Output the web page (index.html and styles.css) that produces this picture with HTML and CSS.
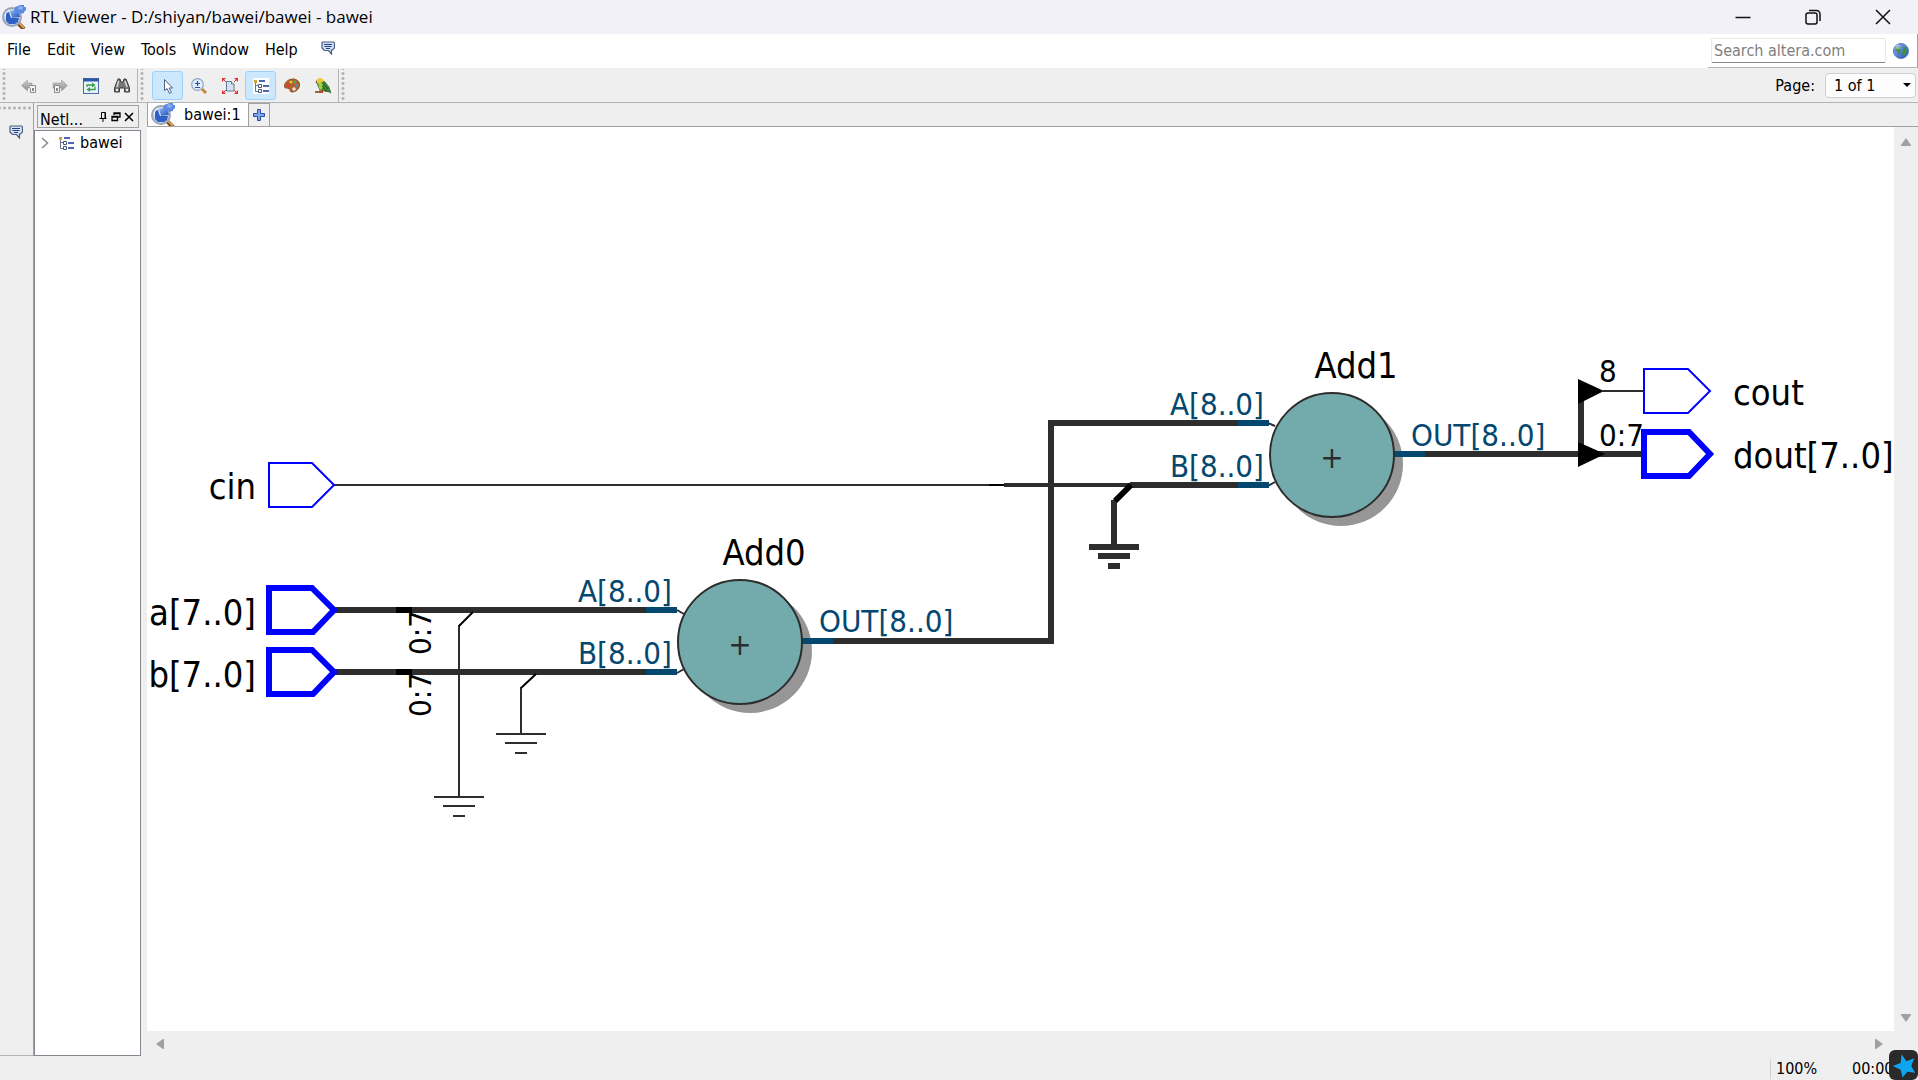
FILE: index.html
```html
<!DOCTYPE html>
<html lang="en">
<head>
<meta charset="utf-8">
<title>RTL Viewer - D:/shiyan/bawei/bawei - bawei</title>
<link rel="stylesheet" href="styles.css">
</head>
<body>
<svg class="defs" aria-hidden="true">
  <defs>
    <linearGradient id="blue" x1="0" y1="0" x2="1" y2="1"><stop offset="0" stop-color="#8fb4f2"/><stop offset="1" stop-color="#2350b8"/></linearGradient>
    <radialGradient id="lens"><stop offset="0" stop-color="#f2f8ff"/><stop offset="1" stop-color="#b9d2f0"/></radialGradient>
    <linearGradient id="grey" x1="0" y1="0" x2="0" y2="1"><stop offset="0" stop-color="#d0d0d0"/><stop offset="1" stop-color="#8c8c8c"/></linearGradient>
    <symbol id="app" viewBox="0 0 24 24">
      <path d="M15 17l7 7" stroke="#6b3f12" stroke-width="4"/><path d="M17 18l5 5" stroke="#e0a050" stroke-width="2"/>
      <circle cx="10" cy="12" r="9" fill="url(#lens)" stroke="#9aa4b4" stroke-width="2"/>
      <path d="M4 8l3-1 2 6h8l-1 4-3 2H7l-3-3z" fill="#2f5fc4"/>
      <path d="M8 6l8-1 2 7-8 1z" fill="url(#blue)"/>
      <path d="M13 2l3-1 2-1h4v2h2v3l-2 2v1l-4 1-3-3-3 0z" fill="#5c8ae2"/>
      <path d="M17 1l4 1-1 3-4-1z" fill="#8fb0f2"/>
      <path d="M3 11a8 8 0 0 1 4-6" stroke="#fff" fill="none"/>
    </symbol>
    <symbol id="note" viewBox="0 0 14 14">
      <path d="M1.500 1h11l1 1v5l-2 2h-1v4L7.500 9.500h-4L1 7V1.500z" fill="#cfe0f8" stroke="#4a5c80" stroke-width="1.200"/>
      <path d="M3 3.500h8M3.500 5.500h7M5 7.500h4" stroke="#27407a"/>
    </symbol>
    <symbol id="tree" viewBox="0 0 16 16">
      <path d="M2.500 4v9.500h3M2.500 7.500h3" stroke="#66758a" fill="none"/>
      <path d="M1 2h3v3H1z" fill="#d6a32c"/>
      <path d="M6 3h6M10 8h6M10 13h6" stroke="#1c2f9c" stroke-width="1.500"/>
      <path d="M5.500 6.500h3v3h-3zM5.500 11.500h3v3h-3z" fill="#fff" stroke="#44567a"/>
    </symbol>
  </defs>
</svg>

<div class="window">
  <header class="titlebar">
    <svg class="app-icon"><use href="#app"/></svg>
    <h1 class="title">RTL Viewer - D:/shiyan/bawei/bawei - bawei</h1>
    <div class="caption">
      <button aria-label="Minimize"><svg viewBox="0 0 16 16"><path d="M.5 8.500h15"/></svg></button>
      <button aria-label="Restore"><svg viewBox="0 0 16 16"><rect x="1" y="4" width="11" height="11" rx="2"/><path d="M4 1.500h7.500a3.500 3.500 0 0 1 3.500 3.500V12"/></svg></button>
      <button aria-label="Close"><svg viewBox="0 0 16 16"><path d="M1 1l14 14M15 1L1 15"/></svg></button>
    </div>
  </header>

  <nav class="menubar">
    <button>File</button><button>Edit</button><button>View</button><button>Tools</button><button>Window</button><button>Help</button>
    <button class="feedback" aria-label="Feedback"><svg class="note"><use href="#note"/></svg></button>
    <form class="search">
      <input type="text" aria-label="Search altera.com" placeholder="Search altera.com">
      <button type="button" aria-label="Search the web"><svg viewBox="0 0 16 16"><circle cx="8" cy="8" r="7.500" fill="url(#blue)" stroke="#5a78c0"/><path d="M2 7l3-4 3 1-1 2 1 2-2 0 1 3-2-1-1-2zM10 3l3 2 1 3-2 4-2 1-1-3 1-3z" fill="#3f9140"/><circle cx="5" cy="4" r="2.500" fill="#fff" opacity=".35"/></svg></button>
    </form>
  </nav>

  <div class="toolbar">
    <span class="grip"></span>
    <button aria-label="Back"><svg viewBox="0 0 16 16"><path d="M.5 7.500L6.500 2v3H11v5H6.500v3z" fill="url(#grey)" stroke="#9a9a9a" stroke-width=".6"/><path d="M8.500 7.500h6v7h-5v-4" fill="#f6f6f6" stroke="#8a8a8a"/><path d="M12 10v3" stroke="#8a8a8a" stroke-width="2"/></svg></button>
    <button aria-label="Forward"><svg viewBox="0 0 16 16"><path d="M15.500 7.500L9.500 2v3H1v5h8.500v3z" fill="url(#grey)" stroke="#9a9a9a" stroke-width=".6"/><path d="M2.500 7.500h5v7h-5z" fill="#f6f6f6" stroke="#8a8a8a"/><path d="M5 10v3" stroke="#8a8a8a" stroke-width="2"/></svg></button>
    <button aria-label="Refresh"><svg viewBox="0 0 16 16"><rect x=".5" y=".5" width="15" height="15" fill="#eaf2fc" stroke="#4a6cae"/><path d="M0 2h16" stroke="#2f58a8" stroke-width="3"/><path d="M4 9V7h6M12 8.500v3H6" stroke="#3aa044" stroke-width="1.300" fill="none"/><path d="M9 4.500L12.500 7 9 9.500zM7 9l-3.500 2.500L7 14z" fill="#3aa044"/></svg></button>
    <button aria-label="Find"><svg viewBox="0 0 16 16"><path d="M4 1h2l1 3h2l1-3h2l2 5 1.500 4v4h-5v-4h-5v4h-5v-4L2 6z" fill="#777" stroke="#3c3c3c"/><path d="M4.500 3L3 9M11 3l2 6" stroke="#d8d8d8" stroke-width="1.500"/><path d="M2 11h2v2H2zM12 11h2v2h-2z" fill="#f0f0f0"/></svg></button>
    <span class="grip split"></span>
    <button class="on" aria-label="Select"><svg viewBox="0 0 16 16"><path d="M4.500 1.500v11l2.500-2 2.500 5 2-1-2.500-4.500h3.500z" fill="#fff" stroke="#55607a"/></svg></button>
    <button aria-label="Zoom"><svg viewBox="0 0 16 16"><path d="M11 11l4 4" stroke="#c48a3c" stroke-width="3"/><circle cx="6.500" cy="6.500" r="5.800" fill="#e0edfc" stroke="#90a8c8" stroke-width="1.300"/><path d="M6.500 3v5M4 5.500h5M4 9.500h5" stroke="#2a50a8" stroke-width="1.200"/></svg></button>
    <button aria-label="Fit in window"><svg viewBox="0 0 16 16"><path d="M4.500 3.500h5L12 6v7H4.500z" fill="#d5e2f2" stroke="#66789a"/><path d="M9.500 3.500V6H12" fill="#fff" stroke="#66789a"/><path d="M0 0h4L0 4zM12 0h4v4zM16 12v4h-4zM4 16H0v-4z" fill="#e03434"/><path d="M1 1l3 3M15 1l-3 3M15 15l-3-3M1 15l3-3" stroke="#e03434"/></svg></button>
    <button class="on" aria-label="Netlist navigator"><svg class="plate" viewBox="0 0 16 16"><use href="#tree"/></svg></button>
    <button aria-label="Colors"><svg viewBox="0 0 16 16"><path d="M9 1c4 0 7 3 6.500 6.500-.5 4-4 6.500-7.500 6.500-2.500 0-1.500-2.500-3-3.500S.5 11 .5 8.500C.5 4 5 1 9 1z" fill="#b0622c" stroke="#8a4c20"/><circle cx="4" cy="7.500" r="1.600" fill="#e33"/><circle cx="7" cy="4" r="1.500" fill="#e8c23c"/><circle cx="11" cy="4" r="1.400" fill="#58a848"/><circle cx="12.500" cy="7.500" r="1.400" fill="#5588dd"/><circle cx="10" cy="11" r="1.700" fill="#f0e8e0"/></svg></button>
    <button aria-label="Bird's eye view"><svg viewBox="0 0 16 16"><path d="M0 13h7v2H0z" fill="#9a6a38"/><path d="M10 13h5v1h-5z" fill="#9a6a38"/><path d="M2 4l4-2 4 2 4 5 2 6-4-2-3 0-4-1-2-4z" fill="#3c8a34" stroke="#24561e" stroke-width=".6"/><path d="M3 5l4 0 1 4-2 3-2-2z" fill="#a4cc48"/><path d="M2 1l3-1 3 1 0 3-3 1-3 0z" fill="#f0c830"/><path d="M2 2L.5 4 2 6z" fill="#6b5a30"/><path d="M8 5l5 6M7 8l4 4" stroke="#1e5a24"/><path d="M5 12v3M7.500 12v3" stroke="#b03020"/></svg></button>
    <span class="grip split"></span>
    <div class="pager">
      <label for="page">Page:</label>
      <select id="page"><option>1 of 1</option></select>
    </div>
  </div>

  <div class="workspace">
    <aside class="rail"><button aria-label="Feedback"><svg class="note"><use href="#note"/></svg></button></aside>
    <section class="dock">
      <div class="dock-title">
        <h2>Netl...</h2>
        <button aria-label="Pin"><svg viewBox="0 0 10 10"><path d="M3.500 6V.5h4V6M7 1v5M1.500 6.500h7M5 6.500V10" fill="none" stroke="#000"/></svg></button>
        <button aria-label="Float"><svg viewBox="0 0 10 10"><path d="M3 3V1h6v4H7M3 1.500h6M1 5h6M1 4.500h5.500v4H1z" fill="none" stroke="#000" stroke-width="1.300"/></svg></button>
        <button aria-label="Close panel"><svg viewBox="0 0 10 10"><path d="M1 1l8 8M9 1L1 9" stroke="#000" stroke-width="1.600"/></svg></button>
      </div>
      <ul class="tree">
        <li><svg class="chevron" viewBox="0 0 8 12"><path d="M1 1l5.500 5L1 11" fill="none" stroke="#8a8a8a" stroke-width="1.500"/></svg><svg class="node"><use href="#tree"/></svg>bawei</li>
      </ul>
    </section>

    <main class="viewer">
      <div class="tabs">
        <button class="tab"><svg class="app-icon"><use href="#app"/></svg>bawei:1</button>
        <button class="add" aria-label="New tab"><svg viewBox="0 0 12 12"><path d="M4.500.5h3v4h4v3h-4v4h-3v-4h-4v-3h4z" fill="#7fa6ea" stroke="#2a4ea6"/></svg></button>
      </div>
      <div class="canvas">
        <svg class="schematic" viewBox="147 127 1747 904" preserveAspectRatio="xMinYMin meet">
          <g class="shadow"><circle cx="750" cy="651" r="62"/><circle cx="1341" cy="464" r="62"/></g>

          <g class="wire thin">
            <path d="M334 485H1004M1603 391H1644"/>
            <path d="M459 625V797M434 797H484M443 806H475M453 816H465"/>
            <path d="M521 687V734M496 734H546M505 743H537M515 753H527"/>
            <path d="M677 610l7 4M677 673l7-4M1268 423l7 3M1268 486l7-4"/>
          </g>
          <path class="wire mid" d="M1004 485H1132"/>
          <g class="wire bus">
            <path d="M335 610H646M335 672H646"/>
            <path d="M833 641H1051V423H1238M1130 485H1238"/>
            <path d="M1114 500V547M1089 547H1139M1098 556H1130M1108 566H1120"/>
            <path d="M1425 454H1644M1581 454V391"/>
          </g>
          <g class="tap"><path d="M473 612L459 626M536 674L521 688M989 485H1004"/><path class="wide" d="M396 610H412M396 672H412M1131 485L1115 501"/></g>
          <path class="stub" d="M646 610H677M646 672H677M802 641H833M1238 423H1269M1238 485H1269M1394 454H1425"/>
          <path class="arrow" d="M1578 379V404L1604 391zM1578 442V467L1605 454z"/>

          <g class="adder"><circle cx="740" cy="642" r="62"/><circle cx="1332" cy="455" r="62"/></g>

          <g class="name">
            <text x="256" y="499" text-anchor="end">cin</text>
            <text x="256" y="625" text-anchor="end">a[7..0]</text>
            <text x="256" y="687" text-anchor="end">b[7..0]</text>
            <text x="764" y="565" text-anchor="middle">Add0</text>
            <text x="1356" y="378" text-anchor="middle">Add1</text>
            <text x="1733" y="405">cout</text>
            <text x="1733" y="468">dout[7..0]</text>
          </g>
          <g class="pin">
            <text x="672" y="602" text-anchor="end">A[8..0]</text>
            <text x="672" y="664" text-anchor="end">B[8..0]</text>
            <text x="819" y="632">OUT[8..0]</text>
            <text x="1264" y="415" text-anchor="end">A[8..0]</text>
            <text x="1264" y="477" text-anchor="end">B[8..0]</text>
            <text x="1411" y="446">OUT[8..0]</text>
          </g>
          <g class="bits">
            <text x="1599" y="382">8</text>
            <text x="1599" y="446">0:7</text>
            <text transform="translate(431 655) rotate(-90)">0:7</text>
            <text transform="translate(431 717) rotate(-90)">0:7</text>
            <text class="op" x="740" y="655" text-anchor="middle">+</text>
            <text class="op" x="1332" y="468" text-anchor="middle">+</text>
          </g>

          <g class="port">
            <path d="M269 463H312L334 485L312 507H269z"/>
            <path d="M1644 369H1688L1710 391L1688 413H1644z"/>
            <path class="wide" d="M269 588H312L334 610L313 632H269z"/>
            <path class="wide" d="M269 650H312L334 672L313 694H269z"/>
            <path class="wide" d="M1644 432H1689L1710 454L1689 476H1644z"/>
          </g>
        </svg>
      </div>
      <div class="vscroll"><button aria-label="Scroll up"><svg viewBox="0 0 12 10"><path d="M6 1l5 7v1H1V8z"/></svg></button><button aria-label="Scroll down"><svg viewBox="0 0 12 10"><path d="M6 9l5-7V1H1v1z"/></svg></button></div>
      <div class="hscroll"><button aria-label="Scroll left"><svg viewBox="0 0 10 12"><path d="M1 6l7-5h1v10H8z"/></svg></button><button aria-label="Scroll right"><svg viewBox="0 0 10 12"><path d="M9 6L2 1H1v10h1z"/></svg></button></div>
    </main>
  </div>

  <footer class="status"><span class="zoom">100%</span><span class="time">00:00:00</span></footer>
  <div class="badge"><svg viewBox="0 0 30 30"><path d="M13 4l5 7 8-3-3 8 4 7-8-1-5 6-2-8-8-4 8-3z" fill="#0ea5f0"/></svg></div>
</div>
</body>
</html>
```
FILE: styles.css
```css
* { box-sizing: border-box; }
body {
  margin: 0;
  font: 16px/20px "DejaVu Sans Condensed", "Noto Sans", sans-serif;
  color: #000;
  background: #efefef;
}
button { font: inherit; color: inherit; background: none; border: 0; padding: 0; margin: 0; }
h1, h2 { margin: 0; font-size: inherit; font-weight: 400; }
svg { display: block; flex: none; }
.defs { position: absolute; width: 0; height: 0; }

.window {
  position: relative;
  display: flex;
  flex-direction: column;
  height: 100vh;
  overflow: hidden;
}

.titlebar { display: flex; align-items: center; height: 34px; padding-left: 2px; background: #f2f1f8; }
.app-icon { width: 24px; height: 24px; }
.title { margin-left: 4px; font: 17px/24px "Open Sans", "Noto Sans", sans-serif; }
.caption { display: flex; margin-left: auto; }
.caption button { display: grid; place-items: center; width: 70px; height: 34px; }
.caption svg { width: 16px; height: 16px; fill: none; stroke: #111; stroke-width: 1.5; }

.menubar {
  display: flex;
  align-items: center;
  gap: 16px;
  height: 35px;
  padding-left: 7px;
  background: #fff;
  border-bottom: 1px solid #efefef;
}
.menubar > button { padding-bottom: 2px; }
.note { width: 14px; height: 14px; }
.feedback { margin-left: 7px; margin-bottom: 4px; }
.search {
  display: flex;
  align-items: center;
  gap: 7px;
  height: 34px;
  margin-left: auto;
  padding: 0 8px 0 3px;
  border-right: 1px solid #a0a0a0;
  border-bottom: 1px solid #b4b4b4;
}
.search input {
  width: 175px;
  height: 25px;
  padding: 0 2px;
  font: inherit;
  background: #fff;
  border: 1px solid #e8e8e8;
  border-bottom-color: #868686;
  border-radius: 2px;
}
.search input::placeholder { color: #808080; }
.search svg { width: 16px; height: 16px; }

.toolbar { display: flex; align-items: center; height: 34px; border-bottom: 1px solid #b4b4b4; }
.toolbar > button { display: grid; place-items: center; width: 31px; height: 29px; border: 1px solid transparent; border-radius: 3px; }
.toolbar > button svg { width: 16px; height: 16px; }
.toolbar > .on { background: #cce8ff; border-color: #99d1ff; }
.toolbar .plate { background: #fff; }
.grip {
  align-self: stretch;
  width: 13px;
  background: radial-gradient(circle, #b4b4b4 1px, transparent 2px) 2px 2px / 4px 5px repeat-y;
}
.split { width: 15px; border-left: 1px solid #b4b4b4; }
.pager { position: relative; display: flex; align-items: center; gap: 10px; margin-left: auto; padding-right: 2px; }
.pager select {
  appearance: none;
  width: 91px;
  height: 25px;
  padding: 0 8px;
  font: inherit;
  color: #000;
  background: #fdfdfd;
  border: 1px solid #cfcfcf;
  border-radius: 4px;
}
.pager::after {
  content: "";
  position: absolute;
  right: 7px;
  top: 10px;
  border: 4px solid transparent;
  border-top-color: #000;
  border-bottom-width: 0;
}

.workspace { display: flex; flex: 1; min-height: 0; }
.rail {
  width: 34px;
  border-right: 1px solid #a0a0a0;
  border-bottom: 1px solid #b4b4b4;
  background: radial-gradient(circle, #b4b4b4 1px, transparent 2px) 2px 3px / 5px 4px repeat-x;
}
.rail button { margin: 22px 0 0 9px; }
.dock { display: flex; flex-direction: column; gap: 2px; width: 107px; padding-top: 2px; }
.dock-title { display: flex; align-items: center; gap: 3px; height: 23px; margin: 0 2px 0 3px; padding: 0 4px 0 2px; border: 1px solid #a0a0a0; }
.dock-title h2 { margin: 6px auto 0 0; }
.dock-title svg { width: 10px; height: 10px; }
.tree { flex: 1; margin: 0; padding: 2px 6px; list-style: none; background: #fff; border: 1px solid #828790; }
.tree li { display: flex; align-items: center; height: 20px; }
.chevron { width: 8px; height: 12px; }
.node { width: 16px; height: 16px; margin: 0 6px 0 9px; }

.viewer {
  display: grid;
  flex: 1;
  grid-template: 24px minmax(0, 1fr) 25px / minmax(0, 1fr) 24px;
  min-width: 0;
  margin-left: 6px;
}
.tabs { display: flex; grid-column: 1 / -1; border-bottom: 1px solid #a0a0a0; }
.tab { display: flex; align-items: center; gap: 9px; width: 102px; padding-left: 3px; background: #fff; border: 1px solid #a0a0a0; border-width: 0 1px; white-space: nowrap; overflow: hidden; }
.add { display: grid; place-items: center; width: 21px; border: 1px solid #a0a0a0; border-width: 1px 1px 0 0; }
.add svg { width: 12px; height: 12px; }
.canvas { overflow: hidden; background: #fff; }
.schematic { width: 100%; height: 100%; }
.vscroll { display: flex; flex-direction: column; justify-content: space-between; align-items: center; padding: 10px 0 8px; }
.hscroll { display: flex; justify-content: space-between; align-items: center; padding: 0 10px 0 8px; }
.vscroll svg { width: 12px; height: 10px; fill: #a0a0a0; }
.hscroll svg { width: 10px; height: 12px; fill: #a0a0a0; }

.status { display: flex; justify-content: flex-end; align-items: center; height: 24px; padding-top: 2px; overflow: hidden; }
.zoom { width: 82px; padding-left: 5px; border-left: 1px solid #d0d0d0; }
.time { width: 66px; overflow: hidden; white-space: nowrap; }
.badge { position: absolute; right: 0; bottom: 0; width: 29px; height: 30px; background: #2a2a2a; border-radius: 6px; }
.badge svg { width: 29px; height: 30px; }

.wire, .tap, .stub, .port { fill: none; }
.wire { stroke: #2d2d2d; }
.thin { stroke-width: 2; }
.mid { stroke-width: 4; }
.bus { stroke-width: 6; }
.tap { stroke: #000; stroke-width: 2; }
.port { stroke: #00f; stroke-width: 2; }
.wide { stroke-width: 6; }
.stub { stroke: #04476f; stroke-width: 6; }
.shadow { fill: #969696; }
.adder { fill: #73abac; stroke: #2d2d2d; stroke-width: 2; }
.name { font-size: 36px; }
.pin { font-size: 31px; fill: #04476f; }
.bits { font-size: 31px; }
.op { fill: #2d2d2d; }
```
